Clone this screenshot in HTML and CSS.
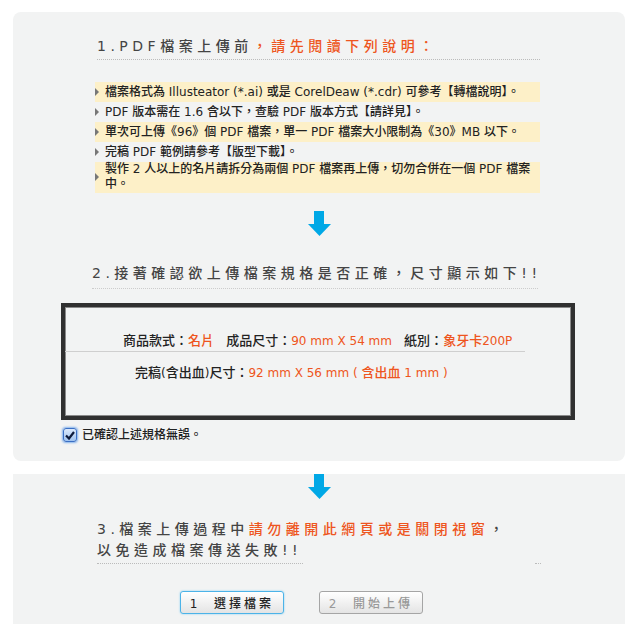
FILE: index.html
```html
<!DOCTYPE html>
<html lang="zh-Hant">
<head>
    <meta charset="UTF-8">
    <meta name="viewport" content="width=device-width, initial-scale=1.0">
    <title>PDF 檔案上傳</title>
    <link rel="stylesheet" href="styles.css">
</head>
<body>

    <div class="panel panel-top">
        <h2 class="step-title step-one">1.PDF檔案上傳前<span class="hot">，請先閱讀下列說明：</span></h2>

        <ul class="tips">
            <li class="mark"><i class="tri"></i><span>檔案格式為 Illusteator (*.ai) 或是 CorelDeaw (*.cdr) 可參考【轉檔說明】。</span></li>
            <li><i class="tri"></i><span>PDF 版本需在 1.6 含以下，查驗 PDF 版本方式【請詳見】。</span></li>
            <li class="mark"><i class="tri"></i><span>單次可上傳《96》個 PDF 檔案，單一 PDF 檔案大小限制為《30》MB 以下。</span></li>
            <li><i class="tri"></i><span>完稿 PDF 範例請參考【版型下載】。</span></li>
            <li class="mark two-line"><i class="tri"></i><span>製作 2 人以上的名片請拆分為兩個 PDF 檔案再上傳，切勿合併在一個 PDF 檔案中。</span></li>
        </ul>

        <div class="arrow">
            <svg width="23" height="25" viewBox="0 0 23 25"><rect x="6" y="0" width="10" height="13" fill="#00a8e6"/><polygon points="0,13 23,13 11.5,25" fill="#00a8e6"/></svg>
        </div>

        <h2 class="step-title step-two">2.接著確認欲上傳檔案規格是否正確，尺寸顯示如下!!</h2>

        <div class="spec-box">
            <div class="spec-row spec-main">
                商品款式：<span class="hot">名片</span>
                <span class="label">成品尺寸：</span><span class="hot num">90 mm X 54 mm</span>
                <span class="label">紙別：</span><span class="hot">象牙卡<span class="num">200P</span></span>
            </div>
            <div class="spec-row spec-bleed">
                完稿<span class="num">(</span>含出血<span class="num">)</span>尺寸：<span class="hot"><span class="num">92 mm X 56 mm ( </span>含出血<span class="num"> 1 mm )</span></span>
            </div>
        </div>

        <label class="confirm">
            <span class="check">
                <svg width="10" height="9" viewBox="0 0 10 9"><path d="M1 4.5 L4 7.5 L9 1" fill="none" stroke="#0d1a3a" stroke-width="2.2"/></svg>
            </span>
            已確認上述規格無誤。
        </label>
    </div>

    <div class="panel panel-bottom">
        <div class="arrow arrow-flush">
            <svg width="23" height="25" viewBox="0 0 23 25"><rect x="6" y="0" width="10" height="13" fill="#00a8e6"/><polygon points="0,13 23,13 11.5,25" fill="#00a8e6"/></svg>
        </div>

        <h2 class="step-title step-three">3.檔案上傳過程中<span class="hot">請勿離開此網頁或是關閉視窗</span>，<br>以免造成檔案傳送失敗!!</h2>
        <div class="split-rule"><span class="seg-long"></span><span class="seg-short"></span></div>

        <div class="buttons">
            <button class="btn btn-active">1&nbsp;&nbsp;選擇檔案</button>
            <button class="btn btn-off">2&nbsp;&nbsp;開始上傳</button>
        </div>
    </div>

</body>
</html>
```

FILE: styles.css
```css
body {
    margin: 0;
    background: #fff;
    font-family: "DejaVu Sans", "Noto Sans CJK TC", sans-serif;
    font-weight: 500;
    color: #222;
}

.hot {
    color: #ee5520;
}

.panel {
    background: #f2f3f3;
    margin: 12px 15px 0 13px;
}

.panel-top {
    border-radius: 8px;
    padding: 24px 0 16px;
}

.panel-bottom {
    margin-top: 13px;
    padding: 0 0 20px;
}

/* step headings */
.step-title {
    margin: 0;
    font-size: 14px;
    font-weight: 500;
    line-height: 20px;
    letter-spacing: 4.5px;
    color: #444;
    white-space: nowrap;
}

.step-one {
    margin-left: 84px;
    width: 443px;
    padding-bottom: 3px;
    border-bottom: 1px dotted #bbb;
}

.step-two {
    margin: 27px 0 0 79px;
    width: 446px;
    padding-bottom: 5px;
    border-bottom: 1px dotted #ccc;
}

.step-three {
    margin: 20px 0 0 84px;
    line-height: 21px;
}

.split-rule {
    display: flex;
    justify-content: space-between;
    margin: 2px 0 0 84px;
    width: 444px;
}

.seg-long,
.seg-short {
    border-top: 1px dotted #bbb;
}

.seg-long {
    width: 206px;
}

.seg-short {
    width: 6px;
}

/* notice list */
.tips {
    list-style: none;
    margin: 22px 0 0 82px;
    padding: 0;
    width: 445px;
    font-size: 12px;
}

.tips li {
    display: flex;
    align-items: center;
    line-height: 16px;
    padding: 2px 0;
}

.tips li.mark {
    background: #fdf0c8;
}

.tips li.two-line {
    line-height: 15px;
    padding: 0 0 1px;
}

.tri {
    flex: none;
    width: 0;
    height: 0;
    border-top: 4px solid transparent;
    border-bottom: 4px solid transparent;
    border-left: 4px solid #777;
    margin-right: 6px;
}

/* arrows */
.arrow {
    display: flex;
    justify-content: center;
    margin-top: 18px;
}

.arrow svg {
    display: block;
}

.arrow-flush {
    margin-top: 0;
}

/* spec box */
.spec-box {
    margin: 14px 0 0 48px;
    width: 506px;
    border: 4px solid #303030;
    box-shadow: inset 0 0 0 1px #8a8a8a;
    padding: 24px 0 33px;
    font-size: 13px;
}

.spec-row {
    line-height: 20px;
    white-space: nowrap;
}

.num {
    font-size: 12px;
}

.spec-main {
    width: 402px;
    padding-left: 58px;
    border-bottom: 1px solid #cfcfcf;
}

.spec-main .label {
    margin-left: 8px;
}

.spec-bleed {
    padding: 11px 0 0 70px;
}

/* confirm checkbox */
.confirm {
    display: flex;
    align-items: center;
    margin: 5px 0 0 50px;
    font-size: 12px;
    line-height: 20px;
}

.check {
    display: flex;
    align-items: center;
    justify-content: center;
    width: 12px;
    height: 12px;
    margin-right: 5px;
    border: 1px solid #3b6fc4;
    border-radius: 3px;
    background: linear-gradient(#dbe9fb, #9fc2ee);
    box-shadow: 0 0 2px 1px #86b3ec;
}

.check svg {
    display: block;
}

/* buttons */
.buttons {
    display: flex;
    gap: 35px;
    margin: 27px 0 0 167px;
}

.btn {
    width: 104px;
    height: 23px;
    padding: 0;
    border-radius: 3px;
    background: linear-gradient(#ffffff, #e4e4e4);
    font-family: "DejaVu Sans", "Noto Sans CJK TC", sans-serif;
    font-size: 12px;
    font-weight: 500;
    letter-spacing: 3px;
}

.btn-active {
    border: 1px solid #4cb3e8;
    box-shadow: 0 0 2px #7ccaf2;
    color: #222;
}

.btn-off {
    border: 1px solid #a5a5a5;
    color: #999;
}
```
